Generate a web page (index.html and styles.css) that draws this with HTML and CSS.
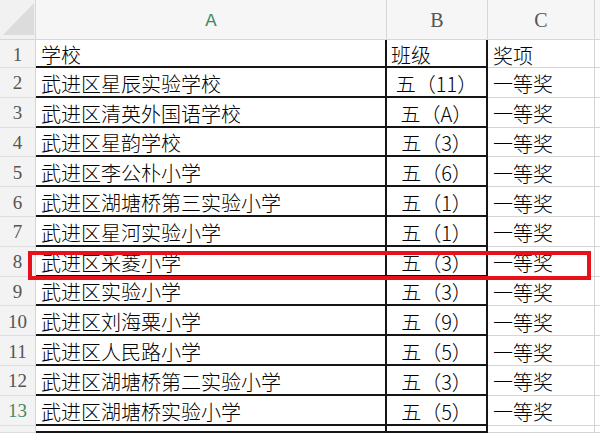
FILE: index.html
```html
<!DOCTYPE html>
<html lang="zh">
<head>
<meta charset="utf-8">
<link rel="stylesheet" href="styles.css">
</head>
<body>
<div class="sheet">
  <div class="corner"><div class="tri"></div></div>
  <div class="colhead sel">A</div>
  <div class="colhead">B</div>
  <div class="colhead">C</div>
  <div class="colhead last"></div>

  <div class="rowhead">1</div><div class="cell a first">学校</div><div class="cell b first left">班级</div><div class="cell c">奖项</div><div class="cell d"></div>
  <div class="rowhead">2</div><div class="cell a">武进区星辰实验学校</div><div class="cell b">五（11）</div><div class="cell c">一等奖</div><div class="cell d"></div>
  <div class="rowhead">3</div><div class="cell a">武进区清英外国语学校</div><div class="cell b">五（A）</div><div class="cell c">一等奖</div><div class="cell d"></div>
  <div class="rowhead">4</div><div class="cell a">武进区星韵学校</div><div class="cell b">五（3）</div><div class="cell c">一等奖</div><div class="cell d"></div>
  <div class="rowhead">5</div><div class="cell a">武进区李公朴小学</div><div class="cell b">五（6）</div><div class="cell c">一等奖</div><div class="cell d"></div>
  <div class="rowhead">6</div><div class="cell a">武进区湖塘桥第三实验小学</div><div class="cell b">五（1）</div><div class="cell c">一等奖</div><div class="cell d"></div>
  <div class="rowhead">7</div><div class="cell a">武进区星河实验小学</div><div class="cell b">五（1）</div><div class="cell c">一等奖</div><div class="cell d"></div>
  <div class="rowhead">8</div><div class="cell a">武进区采菱小学</div><div class="cell b">五（3）</div><div class="cell c">一等奖</div><div class="cell d"></div>
  <div class="rowhead">9</div><div class="cell a">武进区实验小学</div><div class="cell b">五（3）</div><div class="cell c">一等奖</div><div class="cell d"></div>
  <div class="rowhead">10</div><div class="cell a">武进区刘海粟小学</div><div class="cell b">五（9）</div><div class="cell c">一等奖</div><div class="cell d"></div>
  <div class="rowhead">11</div><div class="cell a">武进区人民路小学</div><div class="cell b">五（5）</div><div class="cell c">一等奖</div><div class="cell d"></div>
  <div class="rowhead">12</div><div class="cell a">武进区湖塘桥第二实验小学</div><div class="cell b">五（3）</div><div class="cell c">一等奖</div><div class="cell d"></div>
  <div class="rowhead sel">13</div><div class="cell a">武进区湖塘桥实验小学</div><div class="cell b">五（5）</div><div class="cell c">一等奖</div><div class="cell d"></div>
  <div class="rowhead"></div><div class="cell a"></div><div class="cell b"></div><div class="cell c"></div><div class="cell d"></div>

  <div class="highlight"></div>
</div>
</body>
</html>
```
FILE: styles.css
```css
html, body {
  margin: 0;
  padding: 0;
  background: #ffffff;
  overflow: hidden;
}

.sheet {
  position: relative;
  width: 600px;
  height: 433px;
  display: grid;
  grid-template-columns: 36px 351px 101px 107px 1fr;
  grid-template-rows: 40px 28px repeat(12, 29.8px) 1fr;
  font-family: "Noto Sans CJK SC", "Noto Sans CJK JP", sans-serif;
  font-size: 20px;
  font-weight: 300;
  color: #000000;
  overflow: hidden;
}

.corner {
  background: #f1f1f1;
  border-right: 1px solid #d6d6d6;
  border-bottom: 1px solid #d6d6d6;
  box-sizing: border-box;
  position: relative;
}

.tri {
  position: absolute;
  left: 3px;
  top: 3px;
  width: 31px;
  height: 32px;
  background: #dcdcdc;
  clip-path: polygon(100% 0, 100% 100%, 0 100%);
}

.colhead {
  background: #f6f6f6;
  border-right: 1px solid #d6d6d6;
  border-bottom: 1px solid #d6d6d6;
  box-sizing: border-box;
  display: flex;
  align-items: center;
  justify-content: center;
  font-family: "Liberation Serif", serif;
  font-size: 20px;
  font-weight: 400;
  color: #555555;
  padding-top: 2px;
}

.colhead.sel {
  color: #3f8a63;
  font-family: "Liberation Mono", monospace;
  font-size: 19px;
}

.colhead.last {
  border-right: none;
}

.rowhead {
  background: #f3f3f3;
  border-right: 1px solid #d6d6d6;
  border-bottom: 1px solid #dedede;
  box-sizing: border-box;
  display: flex;
  align-items: center;
  justify-content: center;
  font-family: "Liberation Serif", serif;
  font-size: 19px;
  font-weight: 400;
  color: #555555;
  padding-top: 2px;
}

.rowhead.sel {
  color: #3f8a63;
}

.cell {
  box-sizing: border-box;
  display: flex;
  align-items: center;
  white-space: nowrap;
  line-height: 22px;
  padding-top: 4px;
}

.cell.a {
  border-right: 2px solid #151515;
  border-bottom: 2px solid #151515;
  padding-left: 5px;
}

.cell.b {
  border-right: 2px solid #151515;
  border-bottom: 2px solid #151515;
  justify-content: center;
}

.cell.b.left {
  justify-content: flex-start;
  padding-left: 4px;
}

.cell.c {
  border-right: 1px solid #d4d4d4;
  border-bottom: 1px solid #d4d4d4;
  padding-left: 5px;
}

.cell.d {
  border-bottom: 1px solid #d4d4d4;
}

.highlight {
  position: absolute;
  left: 28px;
  top: 251px;
  width: 563px;
  height: 29px;
  box-sizing: border-box;
  border: 4px solid #e8101a;
  pointer-events: none;
}
```
